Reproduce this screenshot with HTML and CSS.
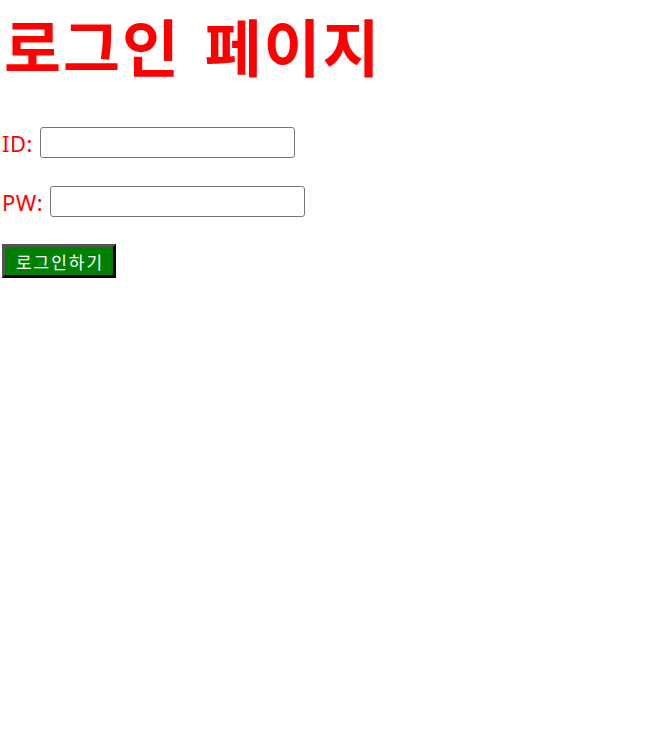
FILE: index.html
```html
<!DOCTYPE html>
<html lang="ko">
<head>
  <meta charset="UTF-8" />
  <title>로그인 페이지</title>
  <link rel="stylesheet" href="styles.css">
</head>
<body>
  <h1 class="title">로그인 페이지</h1>
  <form class="login-form">
    <div class="row">
      <label for="userId">ID:</label>
      <input type="text" id="userId" name="id" />
    </div>
    <div class="row">
      <label for="userPw">PW:</label>
      <input type="password" id="userPw" name="pw" />
    </div>
    <div class="actions">
      <button type="button" class="login-btn">로그인하기</button>
    </div>
  </form>
</body>
</html>
```

FILE: styles.css
```css
body {
  margin: 0;
  padding: 0 2px;
  font-family: "Noto Sans", "Noto Sans CJK KR", sans-serif;
  background: #fff;
}

.title {
  margin: 0;
  padding-top: 2px;
  padding-left: 2px;
  font-family: "Noto Sans CJK KR", sans-serif;
  font-size: 62px;
  font-weight: bold;
  letter-spacing: 2px;
  word-spacing: 4px;
  line-height: 86px;
  color: #ff0000;
}

.login-form {
  display: flex;
  flex-direction: column;
  gap: 28px;
  padding-top: 39px;
}

.row {
  display: flex;
  align-items: center;
  gap: 7px;
  height: 31px;
}

.row label {
  font-size: 22px;
  letter-spacing: 0.5px;
  color: #ff0000;
}

.row input {
  box-sizing: border-box;
  width: 255px;
  height: 31px;
  border: 1px solid #767676;
  border-radius: 3px;
  padding: 2px 6px;
  font-size: 16px;
}

.actions {
  display: flex;
  margin-top: -1px;
}

.login-btn {
  height: 34px;
  width: 114px;
  box-sizing: border-box;
  background: #008000;
  color: #fff;
  font-family: "Noto Sans CJK KR", sans-serif;
  font-size: 17px;
  letter-spacing: 2px;
  border: 3px outset #555;
  border-right-color: #000;
  border-bottom-color: #000;
  padding: 0 0 0 2px;
  cursor: pointer;
}
```
